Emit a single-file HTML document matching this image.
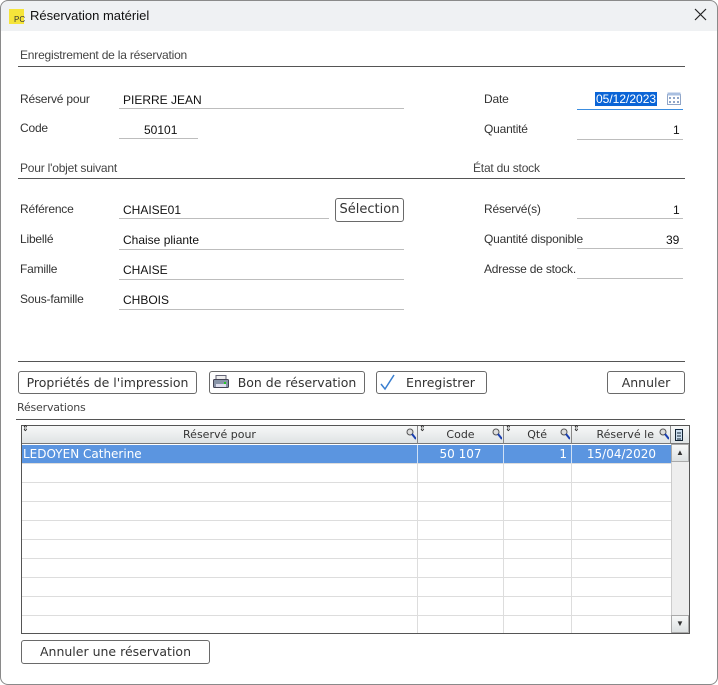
<!DOCTYPE html>
<html><head><meta charset="utf-8"><style>
*{margin:0;padding:0;box-sizing:border-box}
body{width:718px;height:685px;background:#fff;position:relative;overflow:hidden;font-family:"Liberation Sans",sans-serif;font-size:12px;color:#222}
.win{position:absolute;left:0;top:0;width:718px;height:685px;background:#fff;overflow:hidden;border-radius:8px}
.frame{position:absolute;left:0;top:0;width:718px;height:685px;border:1px solid #8a8a8a;border-radius:8px;pointer-events:none}
.title{position:absolute;left:0;top:0;width:100%;height:31px;background:#eff1f3}
.a{position:absolute;white-space:nowrap}
.lbl{color:#333;font-size:12px;letter-spacing:-0.2px}
.val{font-size:12px;color:#111}
.ul{position:absolute;height:1px;background:#bdbdbd}
.hl{position:absolute;height:1px;background:#555}
.btn{position:absolute;border:1px solid #6a6a6a;border-radius:3px;background:#fff;font-family:"DejaVu Sans",sans-serif;font-size:12.5px;color:#333;text-align:center;line-height:21px}
.grid{position:absolute;left:21px;top:425px;width:669px;height:209px;border:1px solid #555;background:#fff}
.vl{position:absolute;width:1px;background:#ddd}
.hr{position:absolute;height:1px;background:#ddd;left:0;width:649px}
.th{position:absolute;top:0;height:18px;background:linear-gradient(#f7f8f8,#dfe3e4);border-right:1px solid #888;border-bottom:1px solid #777;font-family:"DejaVu Sans",sans-serif;font-size:11px;color:#333;text-align:center;line-height:18px}
.sel{position:absolute;top:19px;height:18px;background:#5b95e0;color:#fff;font-family:"DejaVu Sans",sans-serif;font-size:12px;line-height:18px;border-right:1px solid #cfe0f5}
.mag{position:absolute;top:2px;width:10px;height:12px}
</style></head><body>
<div class="win">
<div class="title"></div>
<div class="a" style="left:9px;top:9px;width:15px;height:15px;background:#f5e43a"></div>
<div class="a" style="left:14px;top:15px;font-size:8px;color:#333">PC</div>
<div class="a" style="left:30px;top:8px;font-size:13px;color:#111">Réservation matériel</div>
<svg class="a" style="left:694px;top:8px" width="13" height="13"><path d="M1 1L12 12M12 1L1 12" stroke="#222" stroke-width="1.2"/></svg>

<div class="a lbl" style="left:20px;top:48px;color:#444">Enregistrement de la réservation</div>
<div class="hl" style="left:18px;top:66px;width:667px"></div>

<div class="a lbl" style="left:20px;top:92px">Réservé pour</div>
<div class="a val" style="left:123px;top:93px">PIERRE JEAN</div>
<div class="ul" style="left:119px;top:108px;width:285px"></div>
<div class="a lbl" style="left:20px;top:121px">Code</div>
<div class="a val" style="left:144px;top:123px">50101</div>
<div class="ul" style="left:119px;top:138px;width:79px"></div>

<div class="a lbl" style="left:484px;top:92px">Date</div>
<div class="a val" style="left:595px;top:92px;background:#0a64d6;color:#fff;padding:0 1px">05/12/2023</div>
<svg class="a" style="left:667px;top:92px" width="14" height="13"><rect x="0.5" y="2.5" width="13" height="10" fill="#fff" stroke="#8fa5c8"/><rect x="0.5" y="0.5" width="13" height="3" fill="#a9bfe0"/><g fill="#8fa5c8"><rect x="2" y="5" width="2" height="2"/><rect x="6" y="5" width="2" height="2"/><rect x="10" y="5" width="2" height="2"/><rect x="2" y="9" width="2" height="2"/><rect x="6" y="9" width="2" height="2"/><rect x="10" y="9" width="2" height="2"/></g></svg>
<div class="ul" style="left:577px;top:109px;width:106px;background:#3b8de0"></div>
<div class="a lbl" style="left:484px;top:122px">Quantité</div>
<div class="a val" style="left:673px;top:123px">1</div>
<div class="ul" style="left:577px;top:139px;width:106px"></div>

<div class="a lbl" style="left:20px;top:161px;color:#444">Pour l'objet suivant</div>
<div class="a lbl" style="left:473px;top:161px;color:#444">État du stock</div>
<div class="hl" style="left:18px;top:178px;width:667px"></div>

<div class="a lbl" style="left:20px;top:202px">Référence</div>
<div class="a val" style="left:123px;top:203px">CHAISE01</div>
<div class="ul" style="left:119px;top:218px;width:210px"></div>
<div class="btn" style="left:335px;top:198px;width:69px;height:24px;line-height:22px;font-size:13px">Sélection</div>
<div class="a lbl" style="left:20px;top:232px">Libellé</div>
<div class="a val" style="left:123px;top:233px">Chaise pliante</div>
<div class="ul" style="left:119px;top:249px;width:285px"></div>
<div class="a lbl" style="left:20px;top:262px">Famille</div>
<div class="a val" style="left:123px;top:263px">CHAISE</div>
<div class="ul" style="left:119px;top:279px;width:285px"></div>
<div class="a lbl" style="left:20px;top:292px">Sous-famille</div>
<div class="a val" style="left:123px;top:293px">CHBOIS</div>
<div class="ul" style="left:119px;top:309px;width:285px"></div>

<div class="a lbl" style="left:484px;top:202px">Réservé(s)</div>
<div class="a val" style="left:673px;top:203px">1</div>
<div class="ul" style="left:577px;top:218px;width:106px"></div>
<div class="a lbl" style="left:484px;top:232px">Quantité disponible</div>
<div class="a val" style="left:666px;top:233px">39</div>
<div class="ul" style="left:577px;top:248px;width:106px"></div>
<div class="a lbl" style="left:484px;top:262px">Adresse de stock.</div>
<div class="ul" style="left:577px;top:278px;width:106px"></div>

<div class="hl" style="left:18px;top:361px;width:667px"></div>
<div class="btn" style="left:18px;top:371px;width:179px;height:23px">Propriétés de l'impression</div>
<div class="btn" style="left:209px;top:371px;width:156px;height:23px;padding-left:20px">Bon de réservation</div>
<svg class="a" style="left:213px;top:375px" width="16" height="14"><rect x="3" y="0.5" width="10" height="5" fill="#eee" stroke="#667"/><rect x="0.5" y="4.5" width="15" height="8" rx="1" fill="#8894a8" stroke="#445"/><rect x="3" y="9" width="10" height="3" fill="#dde"/><rect x="11" y="7" width="2" height="2" fill="#2c2"/></svg>
<div class="btn" style="left:376px;top:371px;width:111px;height:23px;padding-left:18px">Enregistrer</div>
<svg class="a" style="left:380px;top:374px" width="16" height="17"><path d="M1 10L5 15L14 1" stroke="#3a7fd0" stroke-width="1.5" fill="none"/></svg>
<div class="btn" style="left:607px;top:371px;width:78px;height:23px">Annuler</div>

<div class="a lbl" style="left:17px;top:401px;font-family:'DejaVu Sans',sans-serif;font-size:11px;color:#444">Réservations</div>
<div class="hl" style="left:16px;top:419px;width:669px"></div>

<div class="grid">
 <div class="th" style="left:0;width:396px">Réservé pour</div>
 <div class="th" style="left:396px;width:86px">Code</div>
 <div class="th" style="left:482px;width:68px;text-align:right;padding-right:24px">Qté</div>
 <div class="th" style="left:550px;width:99px;text-align:right;padding-right:16px">Réservé le</div>
 <div class="th" style="left:649px;width:18px;border-right:0"></div>
 <svg class="a" style="left:652px;top:2px" width="10" height="14"><rect x="1.5" y="1.5" width="7" height="11" fill="#cde" stroke="#123"/><path d="M3 5H7M3 8H7M3 11H7" stroke="#123"/></svg>
 <svg class="mag" style="left:384px"><circle cx="4" cy="4" r="3" fill="#ddd" stroke="#555"/><path d="M6 6L10 11" stroke="#1a3fb0" stroke-width="2"/></svg>
 <svg class="mag" style="left:470px"><circle cx="4" cy="4" r="3" fill="#ddd" stroke="#555"/><path d="M6 6L10 11" stroke="#1a3fb0" stroke-width="2"/></svg>
 <svg class="mag" style="left:538px"><circle cx="4" cy="4" r="3" fill="#ddd" stroke="#555"/><path d="M6 6L10 11" stroke="#1a3fb0" stroke-width="2"/></svg>
 <svg class="mag" style="left:637px"><circle cx="4" cy="4" r="3" fill="#ddd" stroke="#555"/><path d="M6 6L10 11" stroke="#1a3fb0" stroke-width="2"/></svg>
 <div class="a" style="left:0;top:-2px;font-size:8px">⇕</div>
 <div class="a" style="left:397px;top:-2px;font-size:8px">⇕</div>
 <div class="a" style="left:483px;top:-2px;font-size:8px">⇕</div>
 <div class="a" style="left:551px;top:-2px;font-size:8px">⇕</div>
 <div class="vl" style="left:395px;top:37px;height:170px"></div>
 <div class="vl" style="left:481px;top:37px;height:170px"></div>
 <div class="vl" style="left:549px;top:37px;height:170px"></div>
 <div class="hr" style="top:37px"></div>
 <div class="hr" style="top:56px"></div>
 <div class="hr" style="top:75px"></div>
 <div class="hr" style="top:94px"></div>
 <div class="hr" style="top:113px"></div>
 <div class="hr" style="top:132px"></div>
 <div class="hr" style="top:151px"></div>
 <div class="hr" style="top:170px"></div>
 <div class="hr" style="top:189px"></div>
 <div class="sel" style="left:0;width:396px;padding-left:1px">LEDOYEN Catherine</div>
 <div class="sel" style="left:396px;width:86px;text-align:center">50 107</div>
 <div class="sel" style="left:482px;width:68px;text-align:right;padding-right:4px">1</div>
 <div class="sel" style="left:550px;width:99px;text-align:center;border-right:0">15/04/2020</div>
 <div class="a" style="left:649px;top:18px;width:18px;height:189px;background:#eee;border-left:1px solid #ccc"></div>
 <div class="a" style="left:649px;top:18px;width:18px;height:18px;background:linear-gradient(#f7f8f8,#dde1e2);border:1px solid #aaa;font-size:8px;text-align:center;line-height:16px;color:#333">▲</div>
 <div class="a" style="left:649px;top:189px;width:18px;height:18px;background:linear-gradient(#f7f8f8,#dde1e2);border:1px solid #aaa;font-size:8px;text-align:center;line-height:16px;color:#333">▼</div>
</div>

<div class="btn" style="left:21px;top:640px;width:189px;height:24px;line-height:22px">Annuler une réservation</div>
</div>
<div class="frame"></div>
</body></html>
